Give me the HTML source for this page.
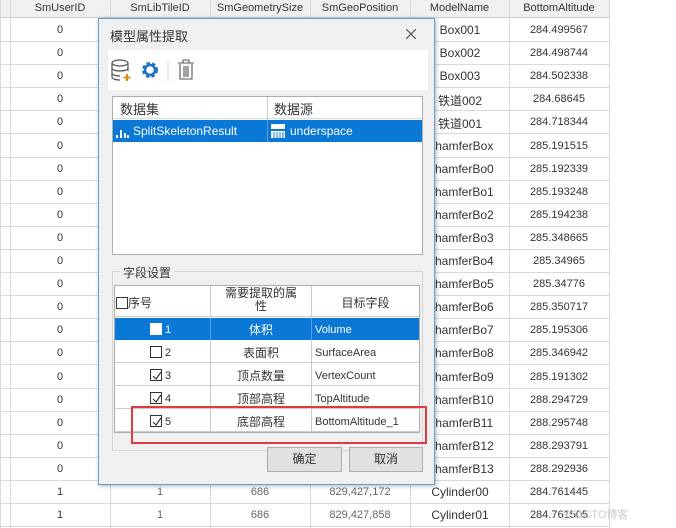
<!DOCTYPE html>
<html><head><meta charset="utf-8"><style>
*{margin:0;padding:0;box-sizing:border-box}
body{width:676px;height:528px;overflow:hidden;background:#fff;font-family:"Liberation Sans","Noto Sans CJK SC",sans-serif;font-size:11px;color:#333;position:relative}
.a{position:absolute}
.c{position:absolute;text-align:center;white-space:nowrap}
.hl{position:absolute;height:1px;background:#d9d9d9}
.vl{position:absolute;width:1px;background:#d9d9d9}
.cb{display:inline-block;width:12px;height:12px;border:1px solid #333;background:#fff;vertical-align:-2px;position:relative}
.cb svg{position:absolute;left:1px;top:1px}
</style></head><body>
<div class="a" style="left:0;top:0;width:609px;height:18px;background:#f0f0f0;border-bottom:1px solid #d0d0d0"></div>
<div id="g"></div>
<script>
var g=document.getElementById('g'),h='';
var cols=[0,10,110,210,310,410,509,609];
var heads=['SmUserID','SmLibTileID','SmGeometrySize','SmGeoPosition','ModelName','BottomAltitude'];
for(var i=0;i<cols.length;i++)h+='<div class="vl" style="left:'+cols[i]+'px;top:0;height:528px"></div>';
for(var i=0;i<6;i++)h+='<div class="c" style="left:'+cols[i+1]+'px;width:'+(cols[i+2]-cols[i+1])+'px;top:2px">'+heads[i]+'</div>';
var mn=['Box001','Box002','Box003','铁道002','铁道001','ChamferBox','ChamferBo0','ChamferBo1','ChamferBo2','ChamferBo3','ChamferBo4','ChamferBo5','ChamferBo6','ChamferBo7','ChamferBo8','ChamferBo9','ChamferB10','ChamferB11','ChamferB12','ChamferB13','Cylinder00','Cylinder01'];
var ba=['284.499567','284.498744','284.502338','284.68645','284.718344','285.191515','285.192339','285.193248','285.194238','285.348665','285.34965','285.34776','285.350717','285.195306','285.346942','285.191302','288.294729','288.295748','288.293791','288.292936','284.761445','284.761505'];
for(var r=0;r<22;r++){var t=18+r*23.1;
h+='<div class="hl" style="left:0;width:609px;top:'+Math.round(t+23)+'px"></div>';
var ty=Math.round(t+6);
h+='<div class="c" style="left:10px;width:100px;top:'+ty+'px">'+(r<20?'0':'1')+'</div>';
if(r>=20){h+='<div class="c" style="left:110px;width:100px;top:'+ty+'px;color:#666">1</div><div class="c" style="left:210px;width:100px;top:'+ty+'px;color:#666">686</div><div class="c" style="left:310px;width:100px;top:'+ty+'px;color:#666">'+(r==20?'829,427,172':'829,427,858')+'</div>';}
h+='<div class="c" style="left:410px;width:100px;top:'+(ty-1)+'px;font-size:12px">'+mn[r]+'</div>';
h+='<div class="c" style="left:509px;width:100px;top:'+ty+'px">'+ba[r]+'</div>';}
g.innerHTML=h;
</script>
<!-- dialog -->
<div class="a" style="left:98px;top:18px;width:337px;height:467px;background:#f0f0f0;border:1px solid #6a9ed0;box-shadow:1px 1px 4px rgba(0,0,0,.3)"></div>
<svg class="a" style="left:406px;top:29px" width="10" height="10"><path d="M0 0L10 10M10 0L0 10" stroke="#555" stroke-width="1.2"/></svg>
<div class="a" style="left:110px;top:26px;font-size:13px;color:#333">模型属性提取</div>
<div class="a" style="left:108px;top:50px;width:320px;height:40px;background:#fff"></div>
<svg class="a" style="left:110px;top:58px" width="90" height="26" viewBox="0 0 90 26">
<g fill="none" stroke="#555" stroke-width="1.2"><ellipse cx="10" cy="5" rx="8" ry="3"/><path d="M2 5v14c0 2 4 3 8 3M18 5v8M2 10c0 2 4 3 8 3s8-1 8-3M2 15c0 2 4 3 8 3"/></g>
<path d="M17 16v7M13.5 19.5h7" stroke="#e08a1e" stroke-width="2"/>
<circle cx="40" cy="12" r="6" fill="none" stroke="#1f72c4" stroke-width="4" stroke-dasharray="3 2"/><circle cx="40" cy="12" r="5" fill="none" stroke="#1f72c4" stroke-width="2.5"/>
<path d="M58 1v24" stroke="#ddd"/>
<g fill="none" stroke="#555" stroke-width="1.1"><path d="M68 5h16M73 5V2h6v3M70 6v15h12V6M74 8v11M76 8v11M78 8v11"/></g>
</svg>
<div class="a" style="left:112px;top:96px;width:311px;height:159px;background:#fff;border:1px solid #adadad"></div>
<div class="a" style="left:113px;top:97px;width:309px;height:22px;border-bottom:1px solid #ddd"></div>
<div class="a" style="left:267px;top:97px;width:1px;height:45px;background:#ccc"></div>
<div class="a" style="left:120px;top:99px;font-size:13px">数据集</div>
<div class="a" style="left:274px;top:99px;font-size:13px">数据源</div>
<div class="a" style="left:113px;top:120px;width:309px;height:22px;background:#0a78d7"></div>
<div class="a" style="left:267px;top:120px;width:1px;height:22px;background:#5aa0e0"></div>
<svg class="a" style="left:116px;top:126px" width="13" height="12"><path d="M1 12v-3M5 12V4M9 12V7M12 12V9" stroke="#fff" stroke-width="2"/></svg>
<div class="a" style="left:133px;top:124px;color:#fff;font-size:12px">SplitSkeletonResult</div>
<svg class="a" style="left:270px;top:123px" width="16" height="16"><rect x="1" y="1" width="14" height="5" fill="#fff"/><rect x="1" y="8" width="14" height="7" fill="#fff"/><path d="M4 9v6M7 9v6M10 9v6M13 9v6" stroke="#0a78d7"/></svg>
<div class="a" style="left:290px;top:124px;color:#fff;font-size:12px">underspace</div>
<!-- group -->
<div class="a" style="left:112px;top:271px;width:311px;height:180px;border:1px solid #d4d4d4"></div>
<div class="a" style="left:120px;top:264px;padding:0 3px;background:#f0f0f0;font-size:12px;color:#333">字段设置</div>
<div class="a" style="left:114px;top:285px;width:306px;height:148px;background:#fff;border:1px solid #adadad"></div>
<div class="a" style="left:115px;top:286px;width:304px;height:31px;border-bottom:1px solid #ccc;background:#fff"></div>
<div class="a" style="left:210px;top:286px;width:1px;height:146px;background:#ccc"></div>
<div class="a" style="left:311px;top:286px;width:1px;height:146px;background:#ccc"></div>
<div class="a" style="left:116px;top:294px;font-size:12px"><span class="cb"></span>序号</div>
<div class="c" style="left:211px;width:100px;top:287px;font-size:12px;line-height:13px">需要提取的属<br>性</div>
<div class="c" style="left:312px;width:107px;top:294px;font-size:12px">目标字段</div>
<div class="a" style="left:115px;top:318px;width:304px;height:22px;background:#0a78d7"></div>
<div class="a" style="left:210px;top:318px;width:1px;height:22px;background:#5aa0e0"></div>
<div class="a" style="left:311px;top:318px;width:1px;height:22px;background:#5aa0e0"></div>
<div class="a" style="left:150px;top:323px;color:#fff"><span class="cb" style="border-color:#fff"></span> 1</div>
<div class="c" style="left:211px;width:100px;top:321px;color:#fff;font-size:12px">体积</div>
<div class="a" style="left:315px;top:324px;color:#fff">Volume</div>
<div class="a" style="left:115px;top:340px;width:304px;height:92px">
<div class="hl" style="left:0;width:304px;top:22px;background:#ccc"></div>
<div class="hl" style="left:0;width:304px;top:45px;background:#ccc"></div>
<div class="hl" style="left:0;width:304px;top:68px;background:#ccc"></div>
<div class="hl" style="left:0;width:304px;top:91px;background:#ccc"></div>
</div>
<div class="a" style="left:150px;top:346px"><span class="cb"></span> 2</div>
<div class="c" style="left:211px;width:100px;top:344px;font-size:12px">表面积</div>
<div class="a" style="left:315px;top:347px">SurfaceArea</div>
<div class="a" style="left:150px;top:369px"><span class="cb"><svg width="10" height="10"><path d="M1 5l3 3 5-7" fill="none" stroke="#333" stroke-width="1.2"/></svg></span> 3</div>
<div class="c" style="left:211px;width:100px;top:367px;font-size:12px">顶点数量</div>
<div class="a" style="left:315px;top:370px">VertexCount</div>
<div class="a" style="left:150px;top:392px"><span class="cb"><svg width="10" height="10"><path d="M1 5l3 3 5-7" fill="none" stroke="#333" stroke-width="1.2"/></svg></span> 4</div>
<div class="c" style="left:211px;width:100px;top:390px;font-size:12px">顶部高程</div>
<div class="a" style="left:315px;top:393px">TopAltitude</div>
<div class="a" style="left:150px;top:415px"><span class="cb"><svg width="10" height="10"><path d="M1 5l3 3 5-7" fill="none" stroke="#333" stroke-width="1.2"/></svg></span> 5</div>
<div class="c" style="left:211px;width:100px;top:413px;font-size:12px">底部高程</div>
<div class="a" style="left:315px;top:416px">BottomAltitude_1</div>
<div class="a" style="left:131px;top:406px;width:296px;height:38px;border:2px solid #e0393e"></div>
<div class="a" style="left:267px;top:447px;width:75px;height:25px;border:1px solid #adadad;background:#e1e1e1;text-align:center;line-height:23px;font-size:12px">确定</div>
<div class="a" style="left:349px;top:447px;width:74px;height:25px;border:1px solid #adadad;background:#e1e1e1;text-align:center;line-height:23px;font-size:12px">取消</div>
<div class="a" style="left:560px;top:506px;color:#ccc;font-size:11px">@51CTO博客</div>
</body></html>
